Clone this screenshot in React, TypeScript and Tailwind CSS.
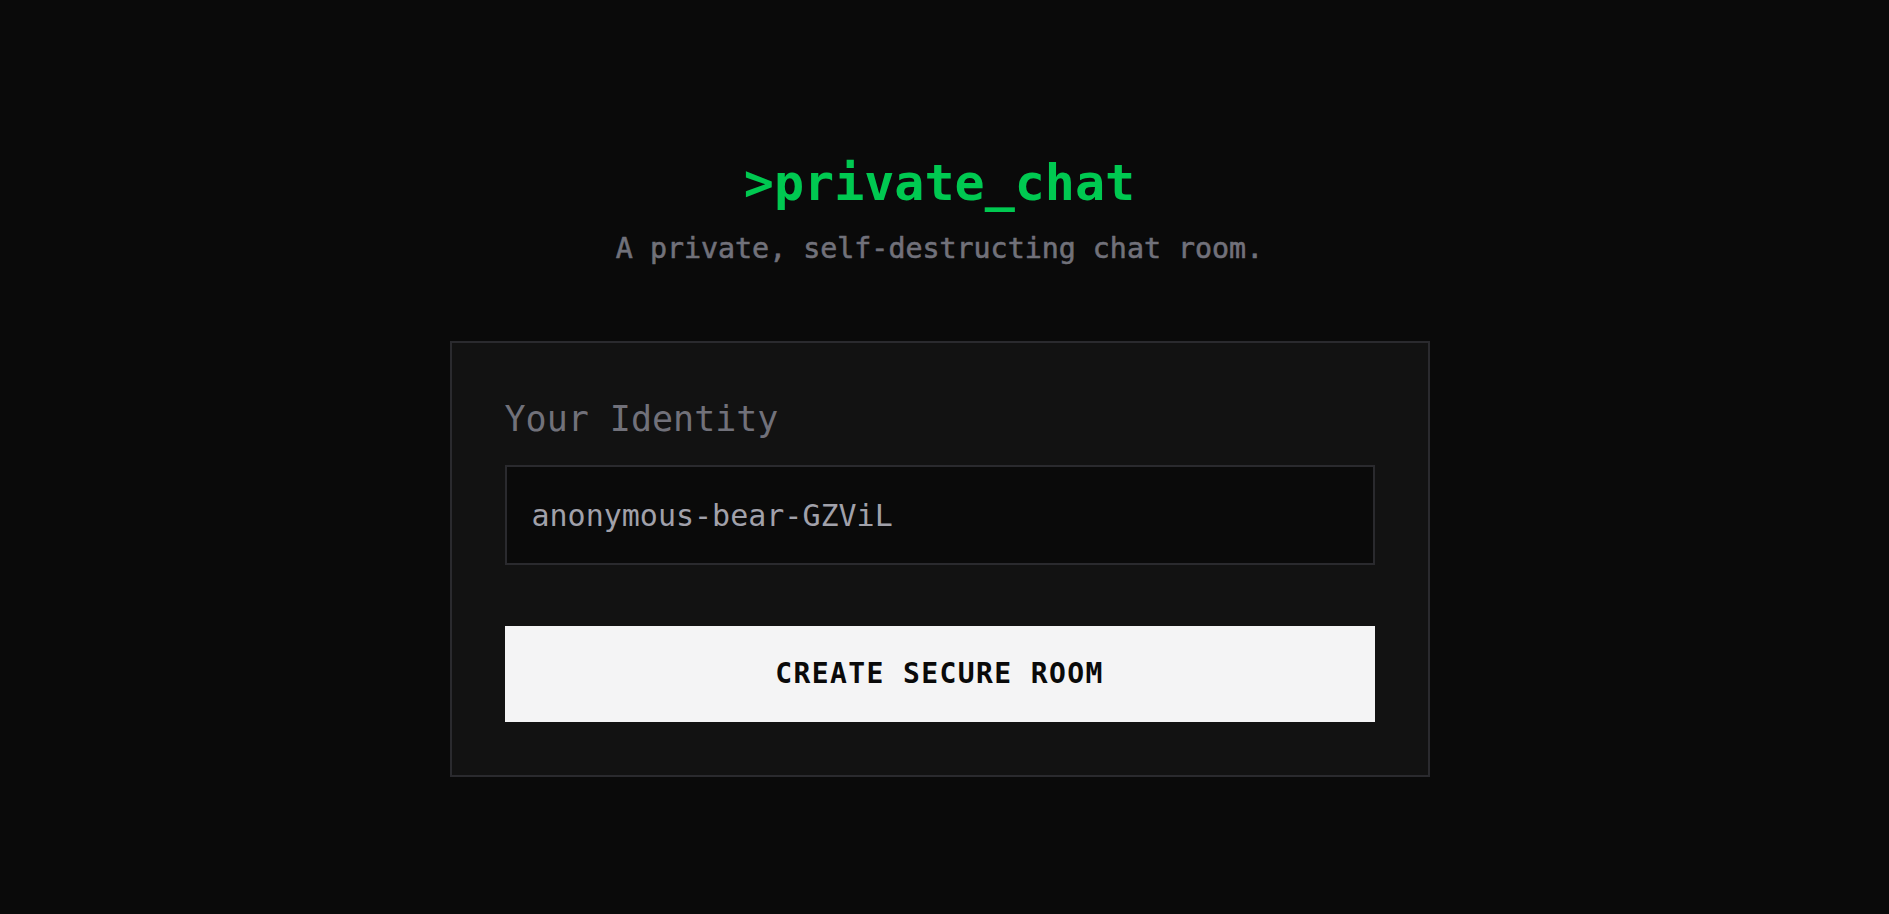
import React, { useState } from 'react';

const mono = { fontFamily: '"DejaVu Sans Mono", "Liberation Mono", monospace' };

const App: React.FC = () => {
  const [username, setUsername] = useState('anonymous-bear-GZViL');

  return (
    <main
      style={mono}
      className="min-h-screen w-full bg-[#0a0a0a] flex flex-col items-center pt-[151px] pr-[10px]"
    >
      {/* Header */}
      <h1 className="text-[50px] leading-[64px] font-bold text-[#00c951]">&gt;private_chat</h1>
      <p className="mt-[14px] text-[28.3px] leading-[40px] text-[#71717a] [-webkit-text-stroke:0.6px_#71717a]">
        A private, self-destructing chat room.
      </p>

      {/* Card */}
      <div className="mt-[72px] w-[980px] border-2 border-[#2a2a2e] bg-[#121212] px-[53px] pt-[48px] pb-[53px]">
        <label className="block text-[35px] leading-[56px] text-[#71717a] mb-[18px]">Your Identity</label>
        <input
          type="text"
          value={username}
          onChange={(e) => setUsername(e.target.value)}
          className="block w-full h-[100px] border-2 border-[#2a2a2e] bg-[#0a0a0a] pl-[25px] pr-4
                     text-[30px] text-[#a1a1aa] focus:outline-none"
        />
        <button className="mt-[61px] w-full h-[96px] bg-[#f4f4f5] text-[28px] font-bold tracking-wider text-[#0a0a0a]">
          CREATE SECURE ROOM
        </button>
      </div>
    </main>
  );
};

export default App;
